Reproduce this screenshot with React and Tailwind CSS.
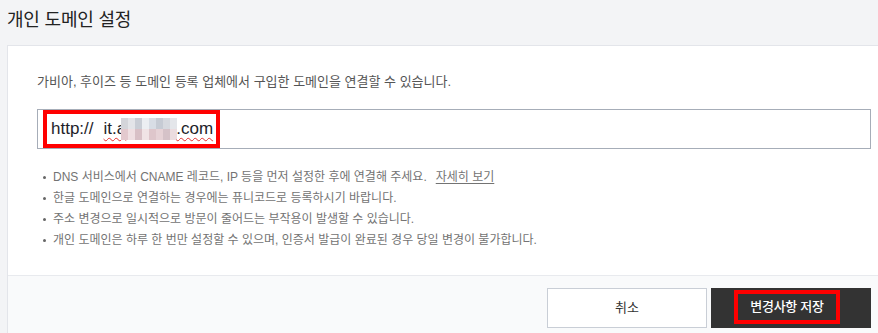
const FONT = { fontFamily: '"Liberation Sans", "Noto Sans CJK KR", sans-serif' };

const notes = [
  "DNS 서비스에서 CNAME 레코드, IP 등을 먼저 설정한 후에 연결해 주세요.",
  "한글 도메인으로 연결하는 경우에는 퓨니코드로 등록하시기 바랍니다.",
  "주소 변경으로 일시적으로 방문이 줄어드는 부작용이 발생할 수 있습니다.",
  "개인 도메인은 하루 한 번만 설정할 수 있으며, 인증서 발급이 완료된 경우 당일 변경이 불가합니다.",
];

// pixelated blur over the hidden part of the domain
const mosaicTop = ["#d4d5da", "#e3e4e8", "#c9cdd5", "#eceef2", "#d8dde5", "#c6cbd4", "#d6d9df", "#e4e6ea"];
const mosaicBottom = ["#e3c9ce", "#efdfe2", "#d8c0c6", "#f0e3e5", "#dec6cb", "#e6d2d6", "#d5c2c8", "#ebdcdf"];

function Mosaic() {
  return (
    <span className="inline-flex flex-col -ml-[5px] mr-[-1px]">
      <span className="flex">
        {mosaicTop.map((c, i) => (
          <span key={i} className="w-[7px] h-[11px]" style={{ background: c }} />
        ))}
      </span>
      <span className="flex">
        {mosaicBottom.map((c, i) => (
          <span key={i} className="w-[7px] h-[11px]" style={{ background: c }} />
        ))}
      </span>
    </span>
  );
}

export default function App() {
  return (
    <div className="w-[878px] h-[333px] overflow-hidden bg-[#f3f4f6]" style={FONT}>
      {/* Title */}
      <div className="h-[45px] pl-[7px] pt-[7px]">
        <h1 className="text-[18px] text-[#222] tracking-[-0.2px]">개인 도메인 설정</h1>
      </div>

      {/* Panel */}
      <div className="ml-[7px] bg-white border-l border-t border-[#e3e5ea]">
        <div className="pl-[29px] pr-[7px] pt-[28px] pb-[27px]">
          <p className="text-[13px] text-[#555] leading-[16px]">
            가비아, 후이즈 등 도메인 등록 업체에서 구입한 도메인을 연결할 수 있습니다.
          </p>

          {/* Domain input */}
          <div className="mt-[19px] h-[40px] border border-[#a6adb8] flex items-center pl-[5px]">
            <div className="h-[38px] border-[4px] border-[#ff0000] flex items-center pl-[4px] pr-[3px] text-[17px] text-[#1e1e2a] whitespace-nowrap">
              <span>http://</span>
              <span className="ml-[10px] underline decoration-wavy decoration-[#e03030] decoration-1 underline-offset-[3px] flex items-center">
                it.a
                <Mosaic />
                .com
              </span>
            </div>
          </div>

          {/* Notes */}
          <ul className="mt-[20px] flex flex-col gap-[5px] pl-[6px]">
            {notes.map((n, i) => (
              <li key={i} className="flex items-center h-[16px] text-[12px] text-[#737373]">
                <span className="w-[3px] h-[3px] rounded-full bg-[#666] mr-[7px] shrink-0" />
                <span>{n}</span>
                {i === 0 && (
                  <a className="ml-[9px] underline underline-offset-[2px] text-[#737373]">자세히 보기</a>
                )}
              </li>
            ))}
          </ul>
        </div>

        {/* Footer */}
        <div className="border-t border-[#e8eaee] bg-[#f9fafb] h-[70px] pt-[12px] pr-[7px] flex justify-end gap-[4px]">
          <button className="w-[160px] h-[40px] bg-white border border-[#c9ced6] text-[13px] text-[#333]">
            취소
          </button>
          <button className="w-[160px] h-[40px] bg-[#333333] flex items-center justify-center pr-[8px] pb-[3px]">
            <span className="border-[4px] border-[#ff0000] h-[34px] px-[12px] flex items-center text-[13px] text-white font-medium tracking-[-0.3px]">
              변경사항 저장
            </span>
          </button>
        </div>
      </div>
    </div>
  );
}
